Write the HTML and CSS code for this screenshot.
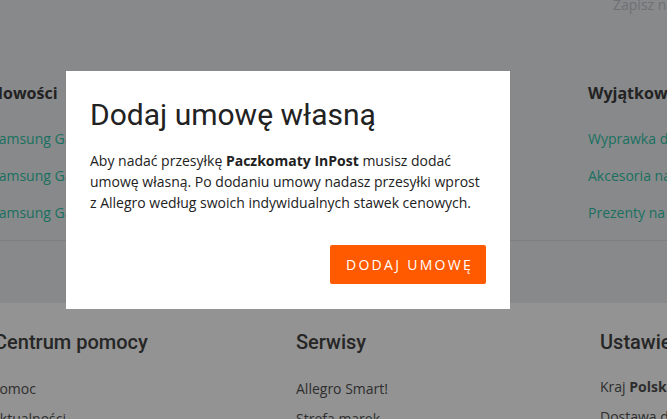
FILE: index.html
```html
<!DOCTYPE html>
<html lang="pl">
<head>
<meta charset="utf-8">
<title>Dodaj umowę własną</title>
<link rel="stylesheet" href="styles.css">
</head>
<body>
<div class="page">
  <section class="promo">
    <div class="newsletter">Zapisz na newsletter</div>
    <div class="promo-cols">
      <div class="promo-col">
        <h3 class="promo-title">Nowości</h3>
        <a class="promo-link">Samsung Galaxy S10</a>
        <a class="promo-link">Samsung Galaxy S10+</a>
        <a class="promo-link">Samsung Galaxy S10e</a>
      </div>
      <div class="promo-col">
        <h3 class="promo-title">Popularne</h3>
        <a class="promo-link">Smartfony</a>
        <a class="promo-link">Laptopy</a>
        <a class="promo-link">Telewizory</a>
      </div>
      <div class="promo-col">
        <h3 class="promo-title">Wyjątkowe okazje</h3>
        <a class="promo-link">Wyprawka dla dziecka</a>
        <a class="promo-link">Akcesoria na wiosnę</a>
        <a class="promo-link">Prezenty na komunię</a>
      </div>
    </div>
  </section>
  <footer class="footer">
    <div class="footer-cols">
      <div class="footer-col">
        <h4 class="footer-title">Centrum pomocy</h4>
        <a class="footer-link">Pomoc</a>
        <a class="footer-link">Aktualności</a>
      </div>
      <div class="footer-col">
        <h4 class="footer-title">Serwisy</h4>
        <a class="footer-link">Allegro Smart!</a>
        <a class="footer-link">Strefa marek</a>
      </div>
      <div class="footer-col">
        <h4 class="footer-title">Ustawienia</h4>
        <a class="footer-link">Kraj <b>Polska</b></a>
        <a class="footer-link">Dostawa do</a>
      </div>
    </div>
  </footer>
</div>

<div class="modal" role="dialog" aria-labelledby="modal-title">
  <h2 class="modal-title" id="modal-title">Dodaj umowę własną</h2>
  <p class="modal-text">Aby nadać przesyłkę <b>Paczkomaty InPost</b> musisz dodać umowę własną. Po dodaniu umowy nadasz przesyłki wprost z Allegro według swoich indywidualnych stawek cenowych.</p>
  <div class="modal-actions">
    <button class="btn-primary" type="button">Dodaj umowę</button>
  </div>
</div>
</body>
</html>
```

FILE: styles.css
```css
html, body {
  margin: 0;
  padding: 0;
}

body {
  background: #939393;
  font-family: "Open Sans", "Liberation Sans", sans-serif;
  color: #222;
  overflow: hidden;
  width: 667px;
  height: 419px;
}

.page {
  width: 1000px;
}

.promo {
  background: #88898b;
  height: 305px;
}

.newsletter {
  height: 14px;
  line-height: 14px;
  margin-top: -2px;
  padding-left: 613px;
  font-size: 14px;
  color: #707173;
  white-space: nowrap;
}

.promo-cols {
  display: grid;
  grid-template-columns: 296px 302px 300px;
  margin-left: -10px;
  padding-top: 70px;
  height: 158px;
  border-bottom: 1px solid #7e7f81;
}

.promo-col {
  display: flex;
  flex-direction: column;
}

.promo-title {
  margin: 0 0 16px;
  font-size: 16px;
  font-weight: 700;
  line-height: 22px;
  color: #222;
  white-space: nowrap;
}

.promo-link {
  font-size: 14px;
  line-height: 37px;
  color: #18705f;
  white-space: nowrap;
}

.promo-col:first-child .promo-link {
  margin-left: 1px;
}

.footer {
  background: #939393;
  padding-top: 26px;
}

.footer-cols {
  display: grid;
  grid-template-columns: 308px 304px 300px;
  margin-left: -12px;
}

.footer-col {
  display: flex;
  flex-direction: column;
}

.footer-col:first-child .footer-title {
  margin-left: 6px;
}

.footer-col:first-child .footer-link {
  margin-left: 3px;
}

.footer-title {
  margin: 0 0 19px;
  font-family: Roboto, "Liberation Sans", sans-serif;
  font-size: 20px;
  font-weight: 500;
  line-height: 26px;
  color: #262626;
  white-space: nowrap;
}

.footer-link {
  font-size: 14px;
  line-height: 30px;
  color: #2e2e2e;
  white-space: nowrap;
}

.footer-col:last-child .footer-link {
  position: relative;
  top: -2px;
}

.modal {
  position: fixed;
  left: 66px;
  top: 71px;
  width: 444px;
  height: 238px;
  box-sizing: border-box;
  background: #fff;
  padding: 26px 24px 0;
}

.modal-title {
  margin: 0;
  font-family: Roboto, "Liberation Sans", sans-serif;
  font-size: 30px;
  font-weight: 400;
  line-height: 36px;
  color: #222;
  white-space: nowrap;
}

.modal-text {
  margin: 17px 0 0;
  font-size: 14px;
  line-height: 21px;
  color: #222;
}

.modal-text b {
  font-weight: 700;
}

.modal-actions {
  display: flex;
  justify-content: flex-end;
  margin-top: 32px;
}

.btn-primary {
  width: 156px;
  height: 39px;
  border: 0;
  border-radius: 2px;
  background: #ff5a00;
  color: #fff;
  font-family: "Open Sans", "Liberation Sans", sans-serif;
  font-size: 14px;
  letter-spacing: 2.3px;
  text-transform: uppercase;
  padding: 0 0 0 3px;
  cursor: pointer;
}
```
